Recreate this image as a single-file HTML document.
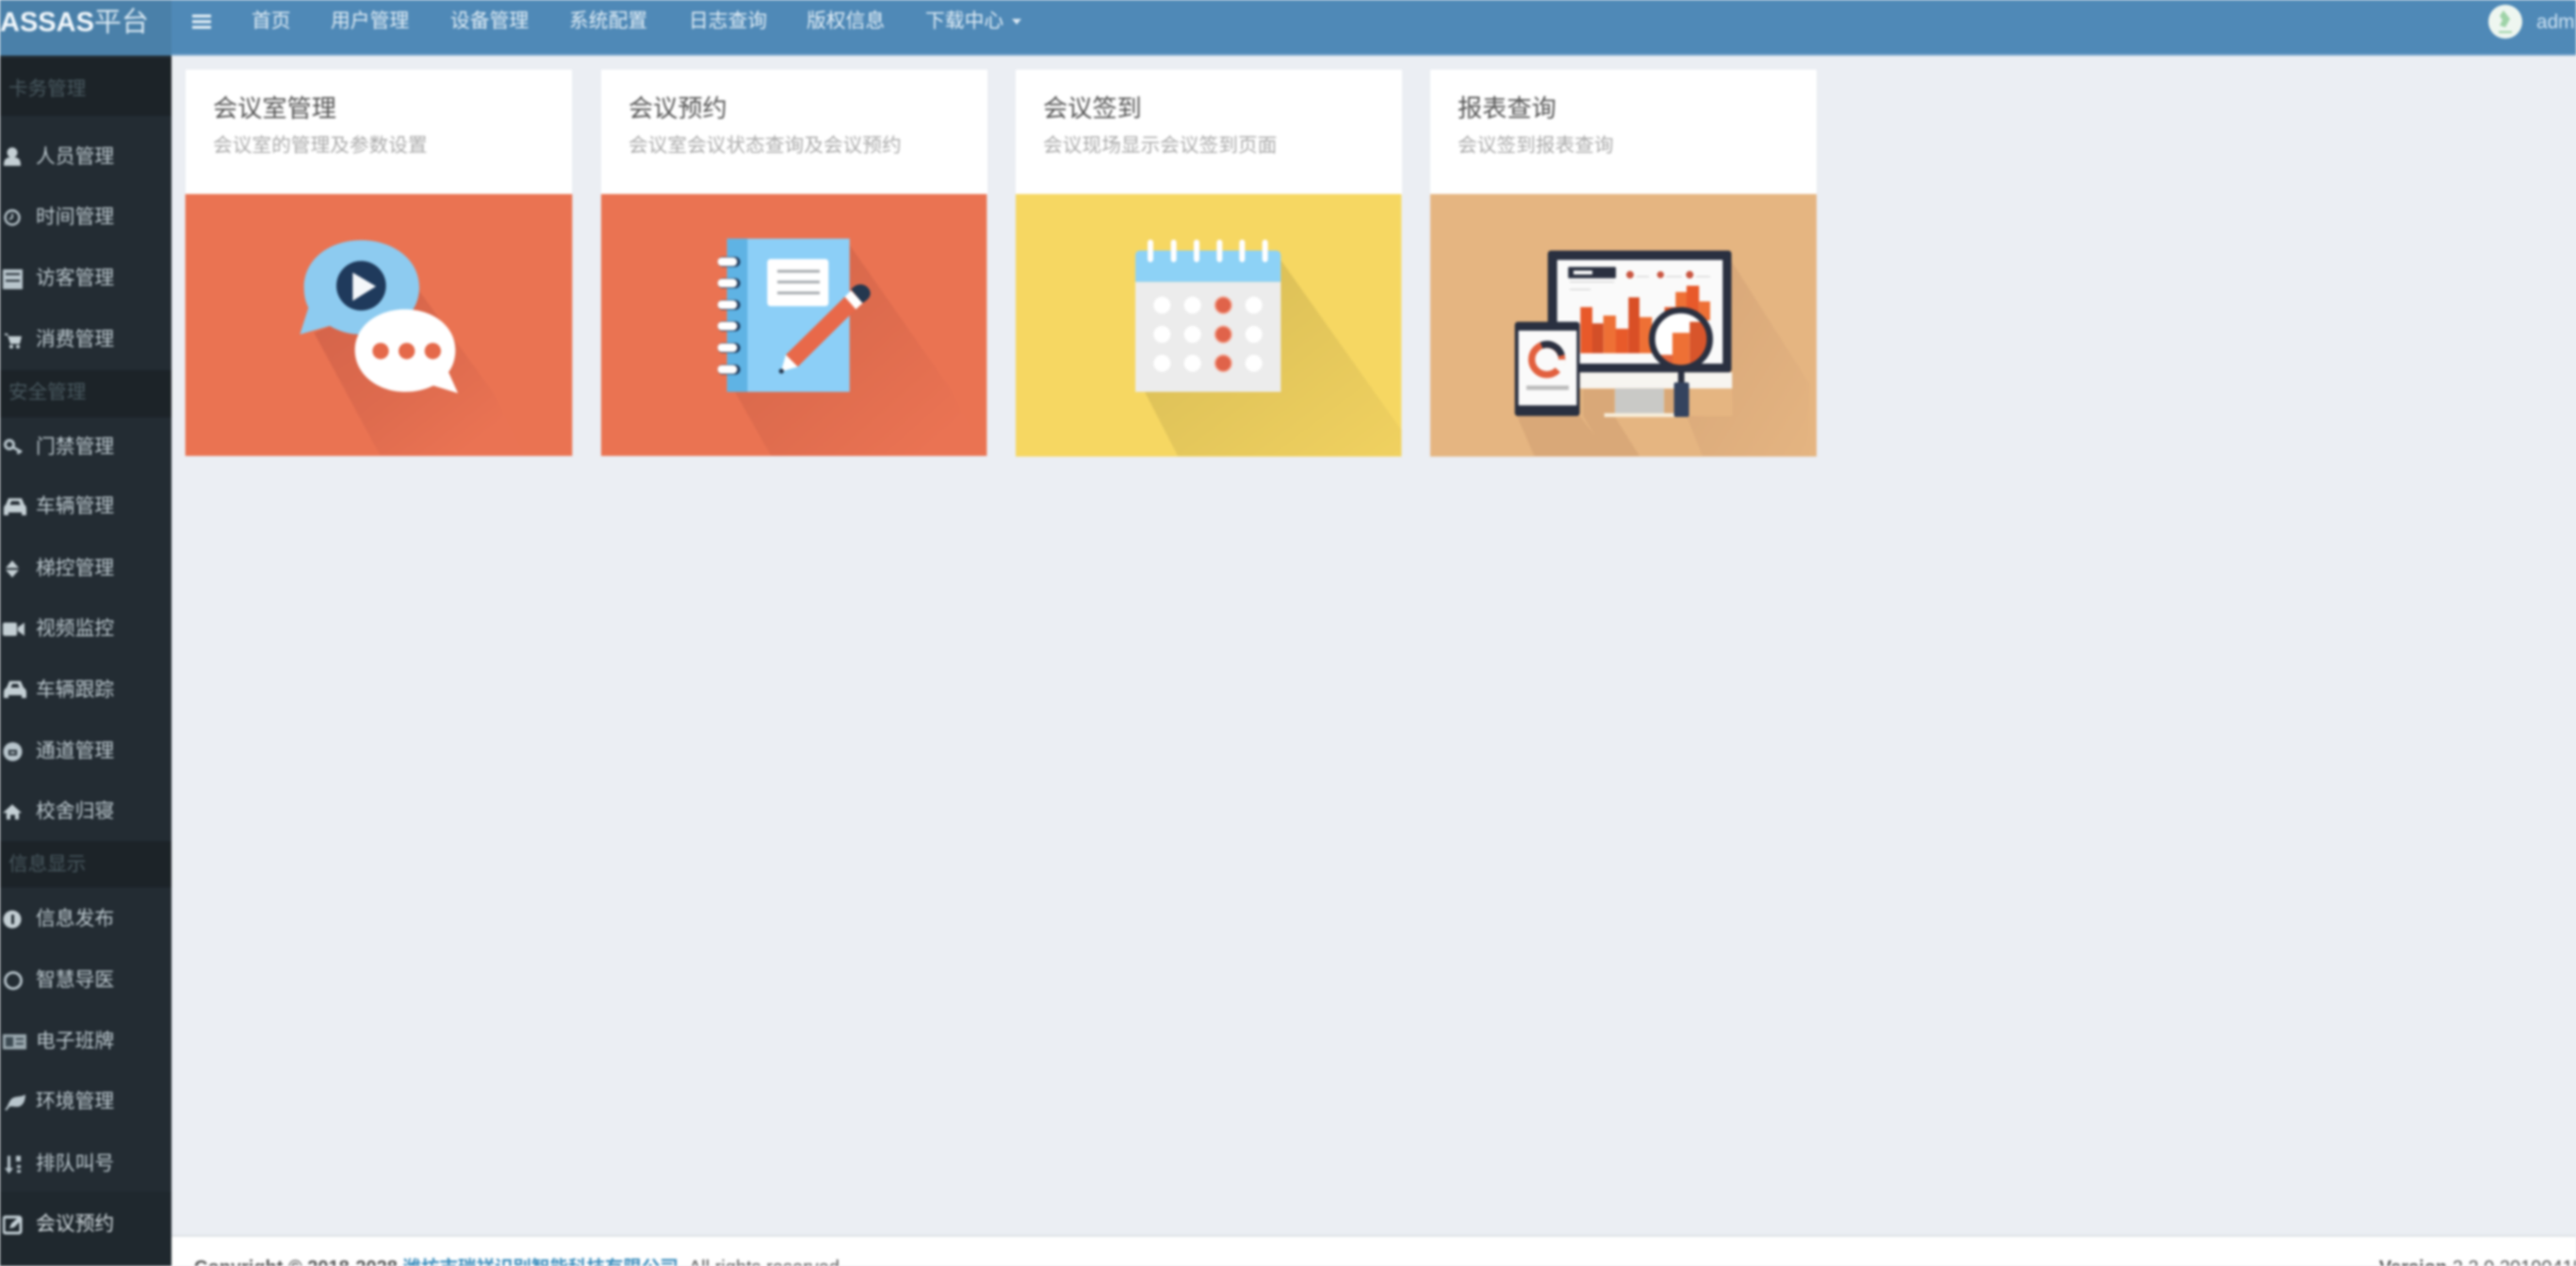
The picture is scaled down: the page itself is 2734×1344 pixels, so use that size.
<!DOCTYPE html>
<html lang="zh"><head><meta charset="utf-8"><title>ASSAS平台</title>
<style>
html,body{margin:0;padding:0;width:2734px;height:1344px;overflow:hidden;background:#ebeef3}
*{box-sizing:border-box}
#w{position:absolute;left:0;top:0;width:2734px;height:1344px;overflow:hidden;filter:blur(1.2px);font-family:"Liberation Sans","Noto Sans CJK SC",sans-serif}
#w div,#w span,#w a,#w svg{position:absolute}
.hd{left:0;top:0;width:2734px;height:59px;background:#4f89b7;border-bottom:2px solid #6f9fc6}
.logo{left:0;top:0;width:182px;height:59px;background:#4a80a9;color:#fff;font-size:29px;line-height:48px;white-space:nowrap}
.logo b{font-weight:700;color:#f2f8fc}.logo i{font-style:normal;color:#d9e8f2}
.n{top:8px;font-size:20.800px;line-height:30px;color:#e2eef6;white-space:nowrap}
.sb{left:0;top:59px;width:182px;height:1285px;background:#232c33}
.g{left:0;width:182px;background:#1c2328}
.gt{left:9px;font-size:20.600px;line-height:30px;color:#48585f;white-space:nowrap}
.it{left:38px;font-size:20.800px;line-height:30px;color:#bcc8ce;white-space:nowrap}
.ic{left:3px;width:22px;height:22px}
.card{top:74px;width:410px;height:133px;background:#fff}
.t{left:29px;top:22px;font-size:26.200px;line-height:38px;color:#555;white-space:nowrap}
.s{left:29px;top:66px;font-size:20.700px;line-height:30px;color:#aaa;white-space:nowrap}
.im{top:200px;width:430px;height:300px}
.ft{left:182px;top:1311px;width:2552px;height:33px;background:#fff;border-top:2px solid #dde1e5}
.ftx{top:1332px;font-size:20px;line-height:28px;color:#555;white-space:nowrap}
</style></head><body><div id="w">

<div class="hd"></div>
<div class="logo"><b>ASSAS</b><i>平台</i></div>
<svg style="left:204px;top:15px" width="20" height="16"><path d="M0 2h20M0 8h20M0 14h20" stroke="#e8f2f8" stroke-width="3"/></svg>
<span class="n" style="left:267px">首页</span>
<span class="n" style="left:351px">用户管理</span>
<span class="n" style="left:478px">设备管理</span>
<span class="n" style="left:604px">系统配置</span>
<span class="n" style="left:731px">日志查询</span>
<span class="n" style="left:856px">版权信息</span>
<span class="n" style="left:982px">下载中心</span>
<svg style="left:1074px;top:20px" width="10" height="7"><path d="M0 0h10L5 6z" fill="#dbe9f3"/></svg>
<svg style="left:2640px;top:4px" width="38" height="38" viewBox="0 0 38 38"><circle cx="19" cy="19" r="18" fill="#eef6f0"/><path d="M17 7l7 9-5 9-6-2 3-6-3-4z" fill="#9fd3a8"/><path d="M12 30h14" stroke="#9fd3a8" stroke-width="2"/></svg>
<span class="n" style="left:2692px;top:9px;color:#cfe3f3">admin</span>

<div class="sb"></div>
<div class="g" style="top:62px;height:61px"></div>
<div class="g" style="top:393px;height:50px"></div>
<div class="g" style="top:893px;height:49px"></div>
<div class="g" style="top:1265px;height:79px;background:#1f282e"></div>

<span class="gt" style="top:80px">卡务管理</span>
<span class="gt" style="top:402px">安全管理</span>
<span class="gt" style="top:903px">信息显示</span>

<span class="it" style="top:152px">人员管理</span>
<span class="it" style="top:216px">时间管理</span>
<span class="it" style="top:281px">访客管理</span>
<span class="it" style="top:346px">消费管理</span>
<span class="it" style="top:460px">门禁管理</span>
<span class="it" style="top:523px">车辆管理</span>
<span class="it" style="top:589px">梯控管理</span>
<span class="it" style="top:653px">视频监控</span>
<span class="it" style="top:718px">车辆跟踪</span>
<span class="it" style="top:783px">通道管理</span>
<span class="it" style="top:847px">校舍归寝</span>
<span class="it" style="top:961px">信息发布</span>
<span class="it" style="top:1026px">智慧导医</span>
<span class="it" style="top:1091px">电子班牌</span>
<span class="it" style="top:1155px">环境管理</span>
<span class="it" style="top:1221px">排队叫号</span>
<span class="it" style="top:1285px;color:#d5dde1">会议预约</span>

<svg class="ic" style="top:156px" viewBox="0 0 22 22" fill="#c4cfd4"><circle cx="10" cy="6" r="5.500"/><path d="M1 20c0-8 3-9 9-9s9 1 9 9z"/></svg>
<svg class="ic" style="top:220px" viewBox="0 0 22 22" fill="none" stroke="#b8c5cc" stroke-width="2.400"><circle cx="10" cy="11" r="7.500"/><path d="M10 7v4l-3 2" stroke-width="1.800"/></svg>
<svg class="ic" style="top:285px" viewBox="0 0 22 22"><rect x="0" y="1" width="21" height="21" fill="#b8c5cc"/><path d="M3 6h15M3 13h15" stroke="#232d34" stroke-width="2"/></svg>
<svg class="ic" style="top:350px" viewBox="0 0 22 22" fill="#c4cfd4"><path d="M2 4h3l1 3h14l-2 8H8L5 6H2z"/><circle cx="9" cy="18" r="2"/><circle cx="16" cy="18" r="2"/></svg>
<svg class="ic" style="top:464px" viewBox="0 0 22 22" fill="none" stroke="#b8c5cc"><circle cx="7" cy="8" r="4.500" stroke-width="3"/><path d="M11 11l9 5M17 15l-1 3" stroke-width="3"/></svg>
<svg class="ic" style="top:527px;width:26px" viewBox="0 0 26 22" fill="#c4cfd4"><path d="M6 2h14l3 7c2 1 2 3 2 5v6h-5v-3H6v3H1v-6c0-2 0-4 2-5zM9 5L7.500 9h11L17 5z" fill-rule="evenodd"/></svg>
<svg class="ic" style="top:593px" viewBox="0 0 22 22" fill="#c4cfd4"><path d="M10 2l7 8H3zM10 20l7-8H3z"/></svg>
<svg class="ic" style="top:657px;width:24px" viewBox="0 0 24 22" fill="#c4cfd4"><rect x="0" y="4" width="15" height="14" rx="2"/><path d="M16 9l7-5v14l-7-5z"/></svg>
<svg class="ic" style="top:722px;width:26px" viewBox="0 0 26 22" fill="#c4cfd4"><path d="M7 1h12l3 7c2 1 3 3 3 5v6h-5v-3H6v3H1v-6c0-2 1-4 3-5zM10 4L8.500 8h9L16 4z" fill-rule="evenodd"/></svg>
<svg class="ic" style="top:787px" viewBox="0 0 22 22"><circle cx="10.500" cy="11" r="10" fill="#b8c5cc"/><rect x="6" y="9" width="9" height="6" fill="#232d34"/><rect x="8" y="11" width="5" height="2" fill="#b8c5cc"/></svg>
<svg class="ic" style="top:851px" viewBox="0 0 22 22" fill="#c4cfd4"><path d="M10 3l10 9h-3v7h-4v-5H8v5H4v-7H0z"/></svg>
<svg class="ic" style="top:965px" viewBox="0 0 22 22"><circle cx="10" cy="11" r="9.500" fill="#c4cfd4"/><path d="M9 6h3v10H9z" fill="#232d34"/></svg>
<svg class="ic" style="top:1030px" viewBox="0 0 22 22" fill="none" stroke="#b8c5cc" stroke-width="2.800"><circle cx="11" cy="11" r="8.500"/></svg>
<svg class="ic" style="top:1095px;width:26px" viewBox="0 0 26 22"><rect x="0" y="3" width="25" height="16" fill="#9aa8af"/><rect x="3" y="6" width="8" height="10" fill="#3c4a52"/><path d="M14 8h8M14 13h8" stroke="#3c4a52" stroke-width="2"/></svg>
<svg class="ic" style="top:1159px;width:26px" viewBox="0 0 26 22" fill="#b8c5cc"><path d="M2 19C6 16 6 8 12 6c4-1 9-1 12-3 0 7-3 13-9 13-4 0-6-1-8 0l-3 4z"/></svg>
<svg class="ic" style="top:1225px" viewBox="0 0 22 22" fill="#b8c5cc"><path d="M5 2h3v13h3l-4.500 6L2 15h3z"/><rect x="14" y="2" width="5" height="6"/><rect x="15" y="12" width="4" height="3"/><rect x="15" y="17" width="4" height="3"/></svg>
<svg class="ic" style="top:1289px" viewBox="0 0 22 22"><rect x="1" y="3" width="18" height="17" rx="2" fill="none" stroke="#c4d0d6" stroke-width="3"/><path d="M7 15l2-5 9-8 3 3-9 9z" fill="#c4d0d6"/></svg>

<!-- Cards -->
<div class="card" style="left:197px"><span class="t">会议室管理</span><span class="s">会议室的管理及参数设置</span></div>
<div class="card" style="left:638px"><span class="t">会议预约</span><span class="s">会议室会议状态查询及会议预约</span></div>
<div class="card" style="left:1078px"><span class="t">会议签到</span><span class="s">会议现场显示会议签到页面</span></div>
<div class="card" style="left:1518px"><span class="t">报表查询</span><span class="s">会议签到报表查询</span></div>

<svg class="im" style="left:190px" viewBox="0 0 1290 900">
<defs><linearGradient id="a1" x1=".1" y1=".1" x2=".85" y2=".85"><stop offset="0" stop-color="#d5644a"/><stop offset=".55" stop-color="#de6b4e"/><stop offset="1" stop-color="#ea7353"/></linearGradient>
<linearGradient id="a2" x1=".05" y1=".05" x2=".9" y2=".9"><stop offset="0" stop-color="#d4664a"/><stop offset=".55" stop-color="#df6c4e"/><stop offset="1" stop-color="#ea7353"/></linearGradient>
<linearGradient id="a3" x1="0" y1="0" x2="1" y2="1"><stop offset="0" stop-color="#d6bb55"/><stop offset="1" stop-color="#f0d160"/></linearGradient>
<linearGradient id="a4" x1="0" y1="0" x2="1" y2="1"><stop offset="0" stop-color="#d7a678"/><stop offset="1" stop-color="#e4b481"/></linearGradient></defs>
<rect x="20" y="18" width="1232" height="834" fill="#ea7352"/>
<path d="M430 460L640 850H1100L1000 650 760 320z" fill="url(#a1)"/>
<path d="M398 315C398 225 480 165 580 165S765 225 765 315C765 400 690 465 580 465 535 465 505 452 480 438L385 465 412 380C402 360 398 340 398 315z" fill="#8dcbf0"/>
<circle cx="580" cy="310" r="79" fill="#1f3a5c"/><path d="M553 268L627 312 553 358z" fill="#f4f7fa"/>
<path d="M560 515C560 440 630 385 720 385S880 440 880 515C880 545 870 570 858 585L888 652 810 628C785 640 755 648 720 648 630 648 560 590 560 515z" fill="#fff"/>
<circle cx="642" cy="518" r="26" fill="#e5694a"/><circle cx="725" cy="518" r="26" fill="#e5694a"/><circle cx="808" cy="518" r="26" fill="#e5694a"/>
</svg>

<svg class="im" style="left:630px" viewBox="0 0 1290 900">
<rect x="24" y="18" width="1228" height="834" fill="#ea7352"/>
<path d="M815 180L1130 630 1200 760V852H565L450 648H815z" fill="url(#a2)"/>
<rect x="425" y="160" width="390" height="488" fill="#8ccff7"/><rect x="425" y="160" width="65" height="488" fill="#5fb3e4"/>
<rect x="553" y="225" width="195" height="150" rx="10" fill="#fff"/>
<path d="M585 264H720M585 298H720M585 333H720" stroke="#a9aeb2" stroke-width="9"/>
<g><rect x="395" y="218" width="72" height="32" rx="16" fill="#1f3a5c"/><rect x="395" y="220" width="62" height="27" rx="13" fill="#fff"/>
<rect x="395" y="286" width="72" height="32" rx="16" fill="#1f3a5c"/><rect x="395" y="288" width="62" height="27" rx="13" fill="#fff"/>
<rect x="395" y="355" width="72" height="32" rx="16" fill="#1f3a5c"/><rect x="395" y="357" width="62" height="27" rx="13" fill="#fff"/>
<rect x="395" y="423" width="72" height="32" rx="16" fill="#1f3a5c"/><rect x="395" y="425" width="62" height="27" rx="13" fill="#fff"/>
<rect x="395" y="492" width="72" height="32" rx="16" fill="#1f3a5c"/><rect x="395" y="494" width="62" height="27" rx="13" fill="#fff"/>
<rect x="395" y="561" width="72" height="32" rx="16" fill="#1f3a5c"/><rect x="395" y="563" width="62" height="27" rx="13" fill="#fff"/></g>
<path d="M612 530L800 345 835 385 650 568z" fill="#e8694a"/>
<path d="M800 345L820 325 857 365 835 385z" fill="#fff"/>
<path d="M820 322C835 302 860 300 875 318 888 335 880 352 856 365z" fill="#25384f"/>
<path d="M597 583L612 530 650 568z" fill="#fff"/><circle cx="598" cy="582" r="8" fill="#25384f"/>
</svg>

<svg class="im" style="left:1070px" viewBox="0 0 1290 900">
<rect x="24" y="18" width="1228" height="836" fill="#f6d762"/>
<path d="M868 228L1252 770V852H540L435 648H868z" fill="url(#a3)"/>
<path d="M405 298V215Q405 198 422 198H851Q868 198 868 215V298z" fill="#8dd2f6"/>
<rect x="405" y="298" width="463" height="350" fill="#ececec"/>
<path d="M453 172V226M527 172V226M600 172V226M673 172V226M745 172V226M818 172V226" stroke="#fff" stroke-width="18" stroke-linecap="round"/>
<g fill="#fff"><circle cx="490" cy="372" r="27"/><circle cx="587" cy="372" r="27"/><circle cx="782" cy="372" r="27"/><circle cx="490" cy="465" r="27"/><circle cx="587" cy="465" r="27"/><circle cx="782" cy="465" r="27"/><circle cx="490" cy="557" r="27"/><circle cx="587" cy="557" r="27"/><circle cx="782" cy="557" r="27"/></g>
<g fill="#e0634a" stroke="#f3a592" stroke-width="5"><circle cx="685" cy="372" r="26"/><circle cx="685" cy="465" r="26"/><circle cx="685" cy="557" r="26"/></g>
</svg>

<svg class="im" style="left:1510px" viewBox="0 0 1290 900">
<defs><clipPath id="mg"><circle cx="822" cy="480" r="90"/></clipPath></defs>
<rect x="24" y="18" width="1230" height="836" fill="#e5b581"/>
<path d="M982 230L1230 620V852H890L840 725H985V640z" fill="url(#a4)"/>
<path d="M510 640H610V725L690 852H590L510 725z" fill="#d9a878"/>
<path d="M770 640H800V725H770z" fill="#d9a878"/>
<path d="M300 725H500L600 852H355z" fill="#d9a878"/>
<rect x="398" y="198" width="585" height="388" rx="10" fill="#2a3040"/>
<rect x="428" y="228" width="527" height="330" fill="#fafafa"/>
<path d="M500 586H985V637H500z" fill="#f7f5f0"/>
<rect x="612" y="637" width="156" height="80" fill="#c9c9c6"/>
<rect x="578" y="716" width="224" height="12" fill="#f8efdc"/>
<rect x="463" y="250" width="152" height="36" rx="3" fill="#2a3040"/><rect x="480" y="262" width="60" height="12" fill="#fff"/>
<circle cx="660" cy="275" r="12" fill="#c9543f"/><circle cx="757" cy="275" r="11" fill="#c9543f"/><circle cx="850" cy="275" r="12" fill="#c9543f"/>
<path d="M680 281H720M775 281H825M870 281H915M468 298H610M468 322H535" stroke="#d8d8d8" stroke-width="4"/>
<g><rect x="502" y="378" width="38" height="147" fill="#e8592a"/><rect x="540" y="430" width="35" height="95" fill="#d34f28"/><rect x="575" y="405" width="40" height="120" fill="#ee7035"/><rect x="615" y="447" width="40" height="78" fill="#e85a2a"/><rect x="655" y="347" width="35" height="178" fill="#d94f26"/><rect x="690" y="410" width="40" height="115" fill="#ee7035"/><rect x="770" y="378" width="35" height="60" fill="#e85a2a"/><rect x="805" y="330" width="35" height="90" fill="#ee7035"/><rect x="840" y="310" width="40" height="110" fill="#e8592a"/><rect x="880" y="360" width="35" height="60" fill="#ee7035"/></g>
<circle cx="822" cy="480" r="90" fill="#fff"/>
<g clip-path="url(#mg)"><rect x="730" y="530" width="65" height="60" fill="#e3643a"/><rect x="795" y="460" width="55" height="120" fill="#ee7035"/><rect x="850" y="425" width="60" height="150" fill="#d8552b"/></g>
<circle cx="822" cy="480" r="92" fill="none" stroke="#2a3040" stroke-width="20"/>
<rect x="813" y="570" width="20" height="55" fill="#2a3040"/><rect x="800" y="618" width="48" height="110" rx="6" fill="#34435e"/>
<rect x="293" y="425" width="207" height="300" rx="10" fill="#2a3040"/>
<rect x="305" y="453" width="185" height="238" fill="#fafafa"/>
<circle cx="395" cy="545" r="48" fill="none" stroke="#e2603e" stroke-width="22"/>
<path d="M378 500A48 48 0 0 1 442 532" fill="none" stroke="#2a3040" stroke-width="22"/>
<path d="M442 545A48 48 0 0 1 430 578" fill="none" stroke="#fafafa" stroke-width="24"/>
<rect x="330" y="628" width="135" height="14" fill="#bdbdbd"/>
</svg>

<div class="ft"></div>
<span class="ftx" style="left:206px"><b style="position:static;font-weight:700">Copyright © 2018-2028 <span style="position:static;color:#3c8dbc;font-size:19.500px">潍坊市瑞祥识别智能科技有限公司.</span></b> All rights reserved.</span>
<span class="ftx" style="left:2525px"><b style="position:static;font-weight:700">Version</b> 2.2.0.20190415</span>
</div></body></html>
